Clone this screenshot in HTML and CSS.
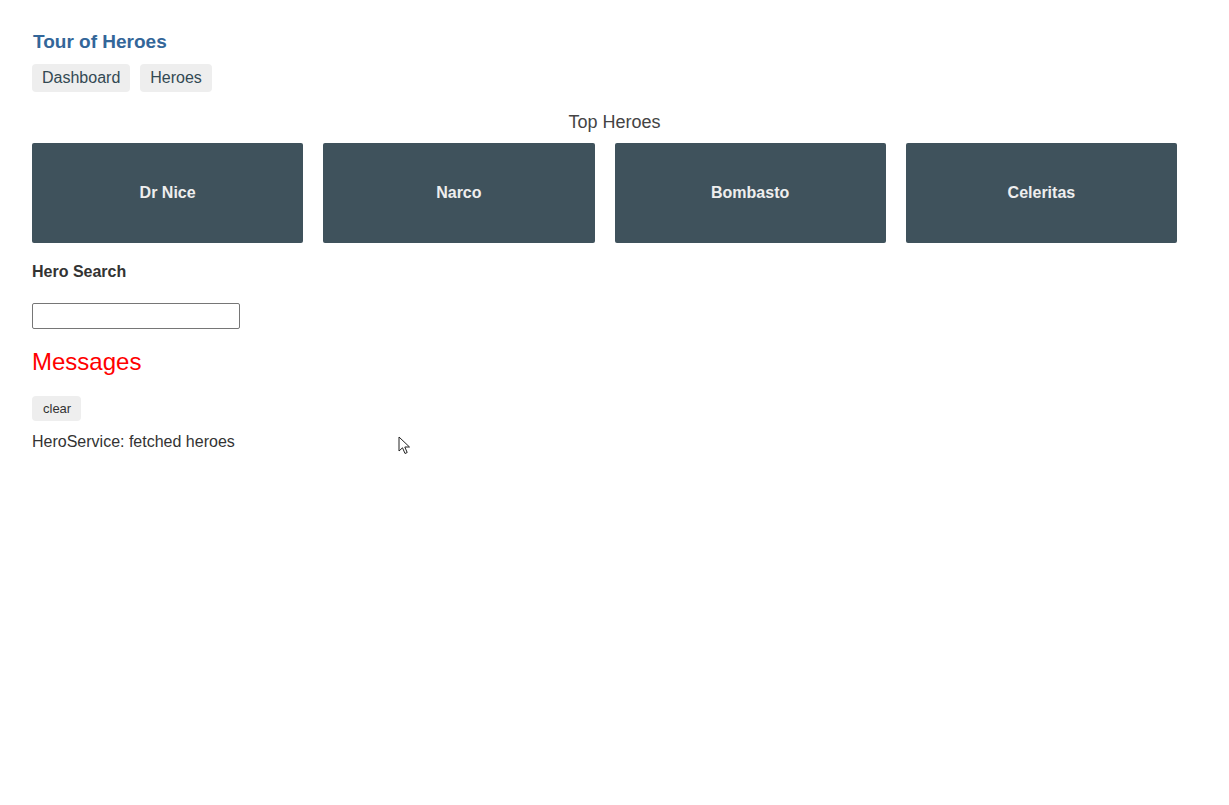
FILE: index.html
```html
<!DOCTYPE html>
<html lang="en">
<head>
    <meta charset="UTF-8">
    <meta name="viewport" content="width=device-width, initial-scale=1.0">
    <title>Tour of Heroes</title>
    <link rel="stylesheet" href="styles.css">
</head>
<body>
    <h1>Tour of Heroes</h1>

    <nav class="main-nav">
        <a href="#">Dashboard</a>
        <a href="#">Heroes</a>
    </nav>

    <h2 class="top-title">Top Heroes</h2>

    <div class="heroes-menu">
        <a class="module" href="#">Dr Nice</a>
        <a class="module" href="#">Narco</a>
        <a class="module" href="#">Bombasto</a>
        <a class="module" href="#">Celeritas</a>
    </div>

    <div id="search-component">
        <label for="search-box">Hero Search</label>
        <input id="search-box" type="text">
    </div>

    <div class="messages">
        <h2>Messages</h2>
        <button class="clear">clear</button>
        <div class="message">HeroService: fetched heroes</div>
    </div>

    <!-- mouse pointer from the capture -->
    <svg class="cursor" width="13" height="20" viewBox="0 0 13 20">
        <path d="M1 1 L1 15 L4.5 11.8 L7 17.5 L9.2 16.5 L6.8 11 L11.5 11 Z" fill="#fff" stroke="#222" stroke-width="1" stroke-linejoin="round"/>
    </svg>
</body>
</html>
```

FILE: styles.css
```css
* {
    font-family: 'Liberation Sans', Arial, sans-serif;
    box-sizing: border-box;
}

body {
    margin: 0;
    padding: 31px 32px;
    color: #333;
    background: #fff;
    position: relative;
}

h1 {
    margin: 0;
    font-size: 19px;
    line-height: 22px;
    color: #369;
    padding-left: 1px;
}

.main-nav {
    display: flex;
    gap: 10px;
    margin-top: 11px;
}

.main-nav a {
    display: inline-block;
    padding: 5px 10px;
    line-height: 18px;
    font-size: 16px;
    background-color: #eee;
    border-radius: 4px;
    color: #334953;
    text-decoration: none;
}

.top-title {
    margin: 20px 0 10px;
    text-align: center;
    font-size: 18px;
    line-height: 21px;
    font-weight: normal;
    color: #444;
}

.heroes-menu {
    display: grid;
    grid-template-columns: repeat(4, 1fr);
    gap: 20px;
    padding-right: 20px;
}

.module {
    height: 100px;
    display: flex;
    align-items: center;
    justify-content: center;
    background-color: #3f525c;
    border-radius: 2px;
    color: #eee;
    font-weight: bold;
    font-size: 16px;
    text-decoration: none;
}

#search-component {
    margin-top: 20px;
}

#search-component label {
    display: block;
    font-weight: bold;
    font-size: 16px;
    line-height: 18px;
}

#search-box {
    display: block;
    margin-top: 22px;
    width: 208px;
    height: 26px;
    border: 1px solid #767676;
    border-radius: 2px;
    padding: 2px 4px;
    font-size: 14px;
}

.messages h2 {
    margin: 19px 0 0;
    color: red;
    font-size: 24px;
    line-height: 28px;
    font-weight: normal;
}

.clear {
    margin-top: 20px;
    display: block;
    padding: 4px 10px 4px 11px;
    line-height: 17px;
    font-size: 13px;
    color: #333;
    background-color: #eee;
    border: none;
    border-radius: 4px;
    cursor: pointer;
}

.message {
    margin-top: 12px;
    font-size: 16px;
    line-height: 18px;
    color: #333;
}

.cursor {
    position: absolute;
    left: 398px;
    top: 436px;
}
```
